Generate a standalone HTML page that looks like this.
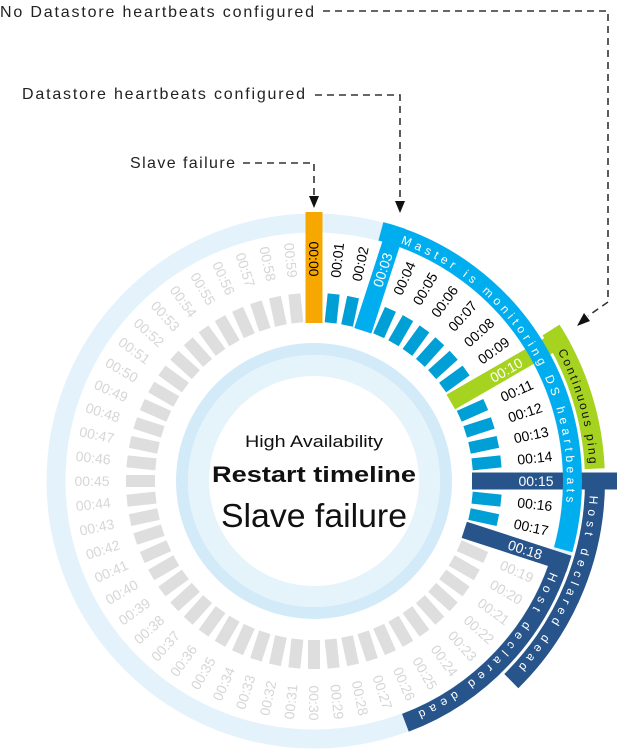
<!DOCTYPE html>
<html><head><meta charset="utf-8"><style>
html,body{margin:0;padding:0;background:#fff;}
svg{display:block;font-family:"Liberation Sans",sans-serif;}
.lg{fill:#d6d6d6;font-size:14px}
.lb{fill:#000;font-size:14px}
.lw{fill:#fff;font-size:14px}
</style></head><body>
<svg width="618" height="749" viewBox="0 0 618 749" xmlns="http://www.w3.org/2000/svg">
<g font-size="16" fill="#222">
<text x="0" y="17" textLength="314">No Datastore heartbeats configured</text>
<text x="22" y="99" textLength="283">Datastore heartbeats configured</text>
<text x="130" y="168" textLength="105">Slave failure</text>
</g>
<g fill="none" stroke="#333" stroke-width="1.6" stroke-dasharray="7 5">
<path d="M323 11 H608 V302 L588 316"/>
<path d="M315 95 H400 V202"/>
<path d="M243 163 H314 V197"/>
</g>
<g fill="#111">
<path d="M577 326 L584 313 L590 321 Z"/>
<path d="M400 213 L395 201 L405 201 Z"/>
<path d="M314 208 L309 196 L319 196 Z"/>
</g>

<g transform="translate(314 481)">
<circle r="258" fill="none" stroke="#e4f3fb" stroke-width="19"/>
<circle r="132" fill="#fff" stroke="#d3ebf8" stroke-width="12"/>
<circle r="115.5" fill="none" stroke="#e5f4fb" stroke-width="21"/>

<g fill="#009fd6">
<rect x="159" y="-6" width="29" height="12" transform="rotate(-84)"/>
<rect x="159" y="-6" width="29" height="12" transform="rotate(-78)"/>
<rect x="159" y="-6" width="29" height="12" transform="rotate(-66)"/>
<rect x="159" y="-6" width="29" height="12" transform="rotate(-60)"/>
<rect x="159" y="-6" width="29" height="12" transform="rotate(-54)"/>
<rect x="159" y="-6" width="29" height="12" transform="rotate(-48)"/>
<rect x="159" y="-6" width="29" height="12" transform="rotate(-42)"/>
<rect x="159" y="-6" width="29" height="12" transform="rotate(-36)"/>
<rect x="159" y="-6" width="29" height="12" transform="rotate(-24)"/>
<rect x="159" y="-6" width="29" height="12" transform="rotate(-18)"/>
<rect x="159" y="-6" width="29" height="12" transform="rotate(-12)"/>
<rect x="159" y="-6" width="29" height="12" transform="rotate(-6)"/>
<rect x="159" y="-6" width="29" height="12" transform="rotate(6)"/>
<rect x="159" y="-6" width="29" height="12" transform="rotate(12)"/>
</g>
<g fill="#dedede">
<rect x="159" y="-6" width="29" height="12" transform="rotate(24)"/>
<rect x="159" y="-6" width="29" height="12" transform="rotate(30)"/>
<rect x="159" y="-6" width="29" height="12" transform="rotate(36)"/>
<rect x="159" y="-6" width="29" height="12" transform="rotate(42)"/>
<rect x="159" y="-6" width="29" height="12" transform="rotate(48)"/>
<rect x="159" y="-6" width="29" height="12" transform="rotate(54)"/>
<rect x="159" y="-6" width="29" height="12" transform="rotate(60)"/>
<rect x="159" y="-6" width="29" height="12" transform="rotate(66)"/>
<rect x="159" y="-6" width="29" height="12" transform="rotate(72)"/>
<rect x="159" y="-6" width="29" height="12" transform="rotate(78)"/>
<rect x="159" y="-6" width="29" height="12" transform="rotate(84)"/>
<rect x="159" y="-6" width="29" height="12" transform="rotate(90)"/>
<rect x="159" y="-6" width="29" height="12" transform="rotate(96)"/>
<rect x="159" y="-6" width="29" height="12" transform="rotate(102)"/>
<rect x="159" y="-6" width="29" height="12" transform="rotate(108)"/>
<rect x="159" y="-6" width="29" height="12" transform="rotate(114)"/>
<rect x="159" y="-6" width="29" height="12" transform="rotate(120)"/>
<rect x="159" y="-6" width="29" height="12" transform="rotate(126)"/>
<rect x="159" y="-6" width="29" height="12" transform="rotate(132)"/>
<rect x="159" y="-6" width="29" height="12" transform="rotate(138)"/>
<rect x="159" y="-6" width="29" height="12" transform="rotate(144)"/>
<rect x="159" y="-6" width="29" height="12" transform="rotate(150)"/>
<rect x="159" y="-6" width="29" height="12" transform="rotate(156)"/>
<rect x="159" y="-6" width="29" height="12" transform="rotate(162)"/>
<rect x="159" y="-6" width="29" height="12" transform="rotate(168)"/>
<rect x="159" y="-6" width="29" height="12" transform="rotate(174)"/>
<rect x="159" y="-6" width="29" height="12" transform="rotate(180)"/>
<rect x="159" y="-6" width="29" height="12" transform="rotate(186)"/>
<rect x="159" y="-6" width="29" height="12" transform="rotate(192)"/>
<rect x="159" y="-6" width="29" height="12" transform="rotate(198)"/>
<rect x="159" y="-6" width="29" height="12" transform="rotate(204)"/>
<rect x="159" y="-6" width="29" height="12" transform="rotate(210)"/>
<rect x="159" y="-6" width="29" height="12" transform="rotate(216)"/>
<rect x="159" y="-6" width="29" height="12" transform="rotate(222)"/>
<rect x="159" y="-6" width="29" height="12" transform="rotate(228)"/>
<rect x="159" y="-6" width="29" height="12" transform="rotate(234)"/>
<rect x="159" y="-6" width="29" height="12" transform="rotate(240)"/>
<rect x="159" y="-6" width="29" height="12" transform="rotate(246)"/>
<rect x="159" y="-6" width="29" height="12" transform="rotate(252)"/>
<rect x="159" y="-6" width="29" height="12" transform="rotate(258)"/>
<rect x="159" y="-6" width="29" height="12" transform="rotate(264)"/>
</g>

<rect x="158" y="-8.5" width="111" height="17" fill="#f7a800" transform="rotate(-90)"/>
<rect x="158" y="-9" width="110" height="18" fill="#00aeef" transform="rotate(-72)"/>
<rect x="158" y="-8.5" width="133" height="17" fill="#a6d31f" transform="rotate(-30)"/>
<rect x="158" y="-8.5" width="145" height="17" fill="#27548a" transform="rotate(0)"/>
<rect x="158" y="-8.5" width="110" height="17" fill="#27548a" transform="rotate(18)"/>

<path d="M237.0 -151.0 A281 281 0 0 1 280.7 -12.3" fill="none" stroke="#a6d31f" stroke-width="20"/>
<path d="M280.9 -7.4 A281 281 0 0 1 197.3 200.1" fill="none" stroke="#27548a" stroke-width="20"/>
<path d="M66.9 -249.7 A258.5 258.5 0 0 1 249.2 68.7" fill="none" stroke="#00aeef" stroke-width="19"/>
<path d="M247.2 75.6 A258.5 258.5 0 0 1 91.4 241.8" fill="none" stroke="#27548a" stroke-width="19"/>

<defs>
<path id="pb" d="M86.5 -237.7 A253 253 0 0 1 244.4 65.5"/>
<path id="pg" d="M243.7 -129.6 A276 276 0 0 1 276 0"/>
<path id="pd1" d="M275.6 14.4 A276 276 0 0 1 191.7 198.5"/>
<path id="pd2" d="M236.2 90.7 A253 253 0 0 1 86.5 237.7"/>
</defs>
<text font-size="12" fill="#fff" letter-spacing="4.3"><textPath href="#pb">Master is monitoring DS heartbeats</textPath></text>
<text font-size="12" fill="#111" letter-spacing="2.2"><textPath href="#pg">Continuous ping</textPath></text>
<text font-size="12" fill="#fff" letter-spacing="5"><textPath href="#pd1">Host declared dead</textPath></text>
<text font-size="12" fill="#fff" letter-spacing="5.5"><textPath href="#pd2">Host declared dead</textPath></text>

<g text-anchor="middle" dominant-baseline="central">
<text class="lb" transform="rotate(-90) translate(222 0) rotate(180)">00:00</text>
<text class="lb" transform="rotate(-84) translate(222 0)">00:01</text>
<text class="lb" transform="rotate(-78) translate(222 0)">00:02</text>
<text class="lw" transform="rotate(-72) translate(222 0)">00:03</text>
<text class="lb" transform="rotate(-66) translate(222 0)">00:04</text>
<text class="lb" transform="rotate(-60) translate(222 0)">00:05</text>
<text class="lb" transform="rotate(-54) translate(222 0)">00:06</text>
<text class="lb" transform="rotate(-48) translate(222 0)">00:07</text>
<text class="lb" transform="rotate(-42) translate(222 0)">00:08</text>
<text class="lb" transform="rotate(-36) translate(222 0)">00:09</text>
<text class="lw" transform="rotate(-30) translate(222 0)">00:10</text>
<text class="lb" transform="rotate(-24) translate(222 0)">00:11</text>
<text class="lb" transform="rotate(-18) translate(222 0)">00:12</text>
<text class="lb" transform="rotate(-12) translate(222 0)">00:13</text>
<text class="lb" transform="rotate(-6) translate(222 0)">00:14</text>
<text class="lw" transform="rotate(0) translate(222 0)">00:15</text>
<text class="lb" transform="rotate(6) translate(222 0)">00:16</text>
<text class="lb" transform="rotate(12) translate(222 0)">00:17</text>
<text class="lw" transform="rotate(18) translate(222 0)">00:18</text>
<text class="lg" transform="rotate(24) translate(222 0)">00:19</text>
<text class="lg" transform="rotate(30) translate(222 0)">00:20</text>
<text class="lg" transform="rotate(36) translate(222 0)">00:21</text>
<text class="lg" transform="rotate(42) translate(222 0)">00:22</text>
<text class="lg" transform="rotate(48) translate(222 0)">00:23</text>
<text class="lg" transform="rotate(54) translate(222 0)">00:24</text>
<text class="lg" transform="rotate(60) translate(222 0)">00:25</text>
<text class="lg" transform="rotate(66) translate(222 0)">00:26</text>
<text class="lg" transform="rotate(72) translate(222 0)">00:27</text>
<text class="lg" transform="rotate(78) translate(222 0)">00:28</text>
<text class="lg" transform="rotate(84) translate(222 0)">00:29</text>
<text class="lg" transform="rotate(90) translate(222 0)">00:30</text>
<text class="lg" transform="rotate(96) translate(222 0) rotate(180)">00:31</text>
<text class="lg" transform="rotate(102) translate(222 0) rotate(180)">00:32</text>
<text class="lg" transform="rotate(108) translate(222 0) rotate(180)">00:33</text>
<text class="lg" transform="rotate(114) translate(222 0) rotate(180)">00:34</text>
<text class="lg" transform="rotate(120) translate(222 0) rotate(180)">00:35</text>
<text class="lg" transform="rotate(126) translate(222 0) rotate(180)">00:36</text>
<text class="lg" transform="rotate(132) translate(222 0) rotate(180)">00:37</text>
<text class="lg" transform="rotate(138) translate(222 0) rotate(180)">00:38</text>
<text class="lg" transform="rotate(144) translate(222 0) rotate(180)">00:39</text>
<text class="lg" transform="rotate(150) translate(222 0) rotate(180)">00:40</text>
<text class="lg" transform="rotate(156) translate(222 0) rotate(180)">00:41</text>
<text class="lg" transform="rotate(162) translate(222 0) rotate(180)">00:42</text>
<text class="lg" transform="rotate(168) translate(222 0) rotate(180)">00:43</text>
<text class="lg" transform="rotate(174) translate(222 0) rotate(180)">00:44</text>
<text class="lg" transform="rotate(180) translate(222 0) rotate(180)">00:45</text>
<text class="lg" transform="rotate(186) translate(222 0) rotate(180)">00:46</text>
<text class="lg" transform="rotate(192) translate(222 0) rotate(180)">00:47</text>
<text class="lg" transform="rotate(198) translate(222 0) rotate(180)">00:48</text>
<text class="lg" transform="rotate(204) translate(222 0) rotate(180)">00:49</text>
<text class="lg" transform="rotate(210) translate(222 0) rotate(180)">00:50</text>
<text class="lg" transform="rotate(216) translate(222 0) rotate(180)">00:51</text>
<text class="lg" transform="rotate(222) translate(222 0) rotate(180)">00:52</text>
<text class="lg" transform="rotate(228) translate(222 0) rotate(180)">00:53</text>
<text class="lg" transform="rotate(234) translate(222 0) rotate(180)">00:54</text>
<text class="lg" transform="rotate(240) translate(222 0) rotate(180)">00:55</text>
<text class="lg" transform="rotate(246) translate(222 0) rotate(180)">00:56</text>
<text class="lg" transform="rotate(252) translate(222 0) rotate(180)">00:57</text>
<text class="lg" transform="rotate(258) translate(222 0) rotate(180)">00:58</text>
<text class="lg" transform="rotate(264) translate(222 0) rotate(180)">00:59</text>
</g>
</g>

<g text-anchor="middle" fill="#111">
<text x="314" y="447" font-size="17" textLength="138" lengthAdjust="spacingAndGlyphs">High Availability</text>
<text x="314" y="482" font-size="22" font-weight="bold" textLength="204" lengthAdjust="spacingAndGlyphs">Restart timeline</text>
<text x="314" y="527" font-size="33" textLength="186" lengthAdjust="spacingAndGlyphs">Slave failure</text>
</g>
</svg>
</body></html>
